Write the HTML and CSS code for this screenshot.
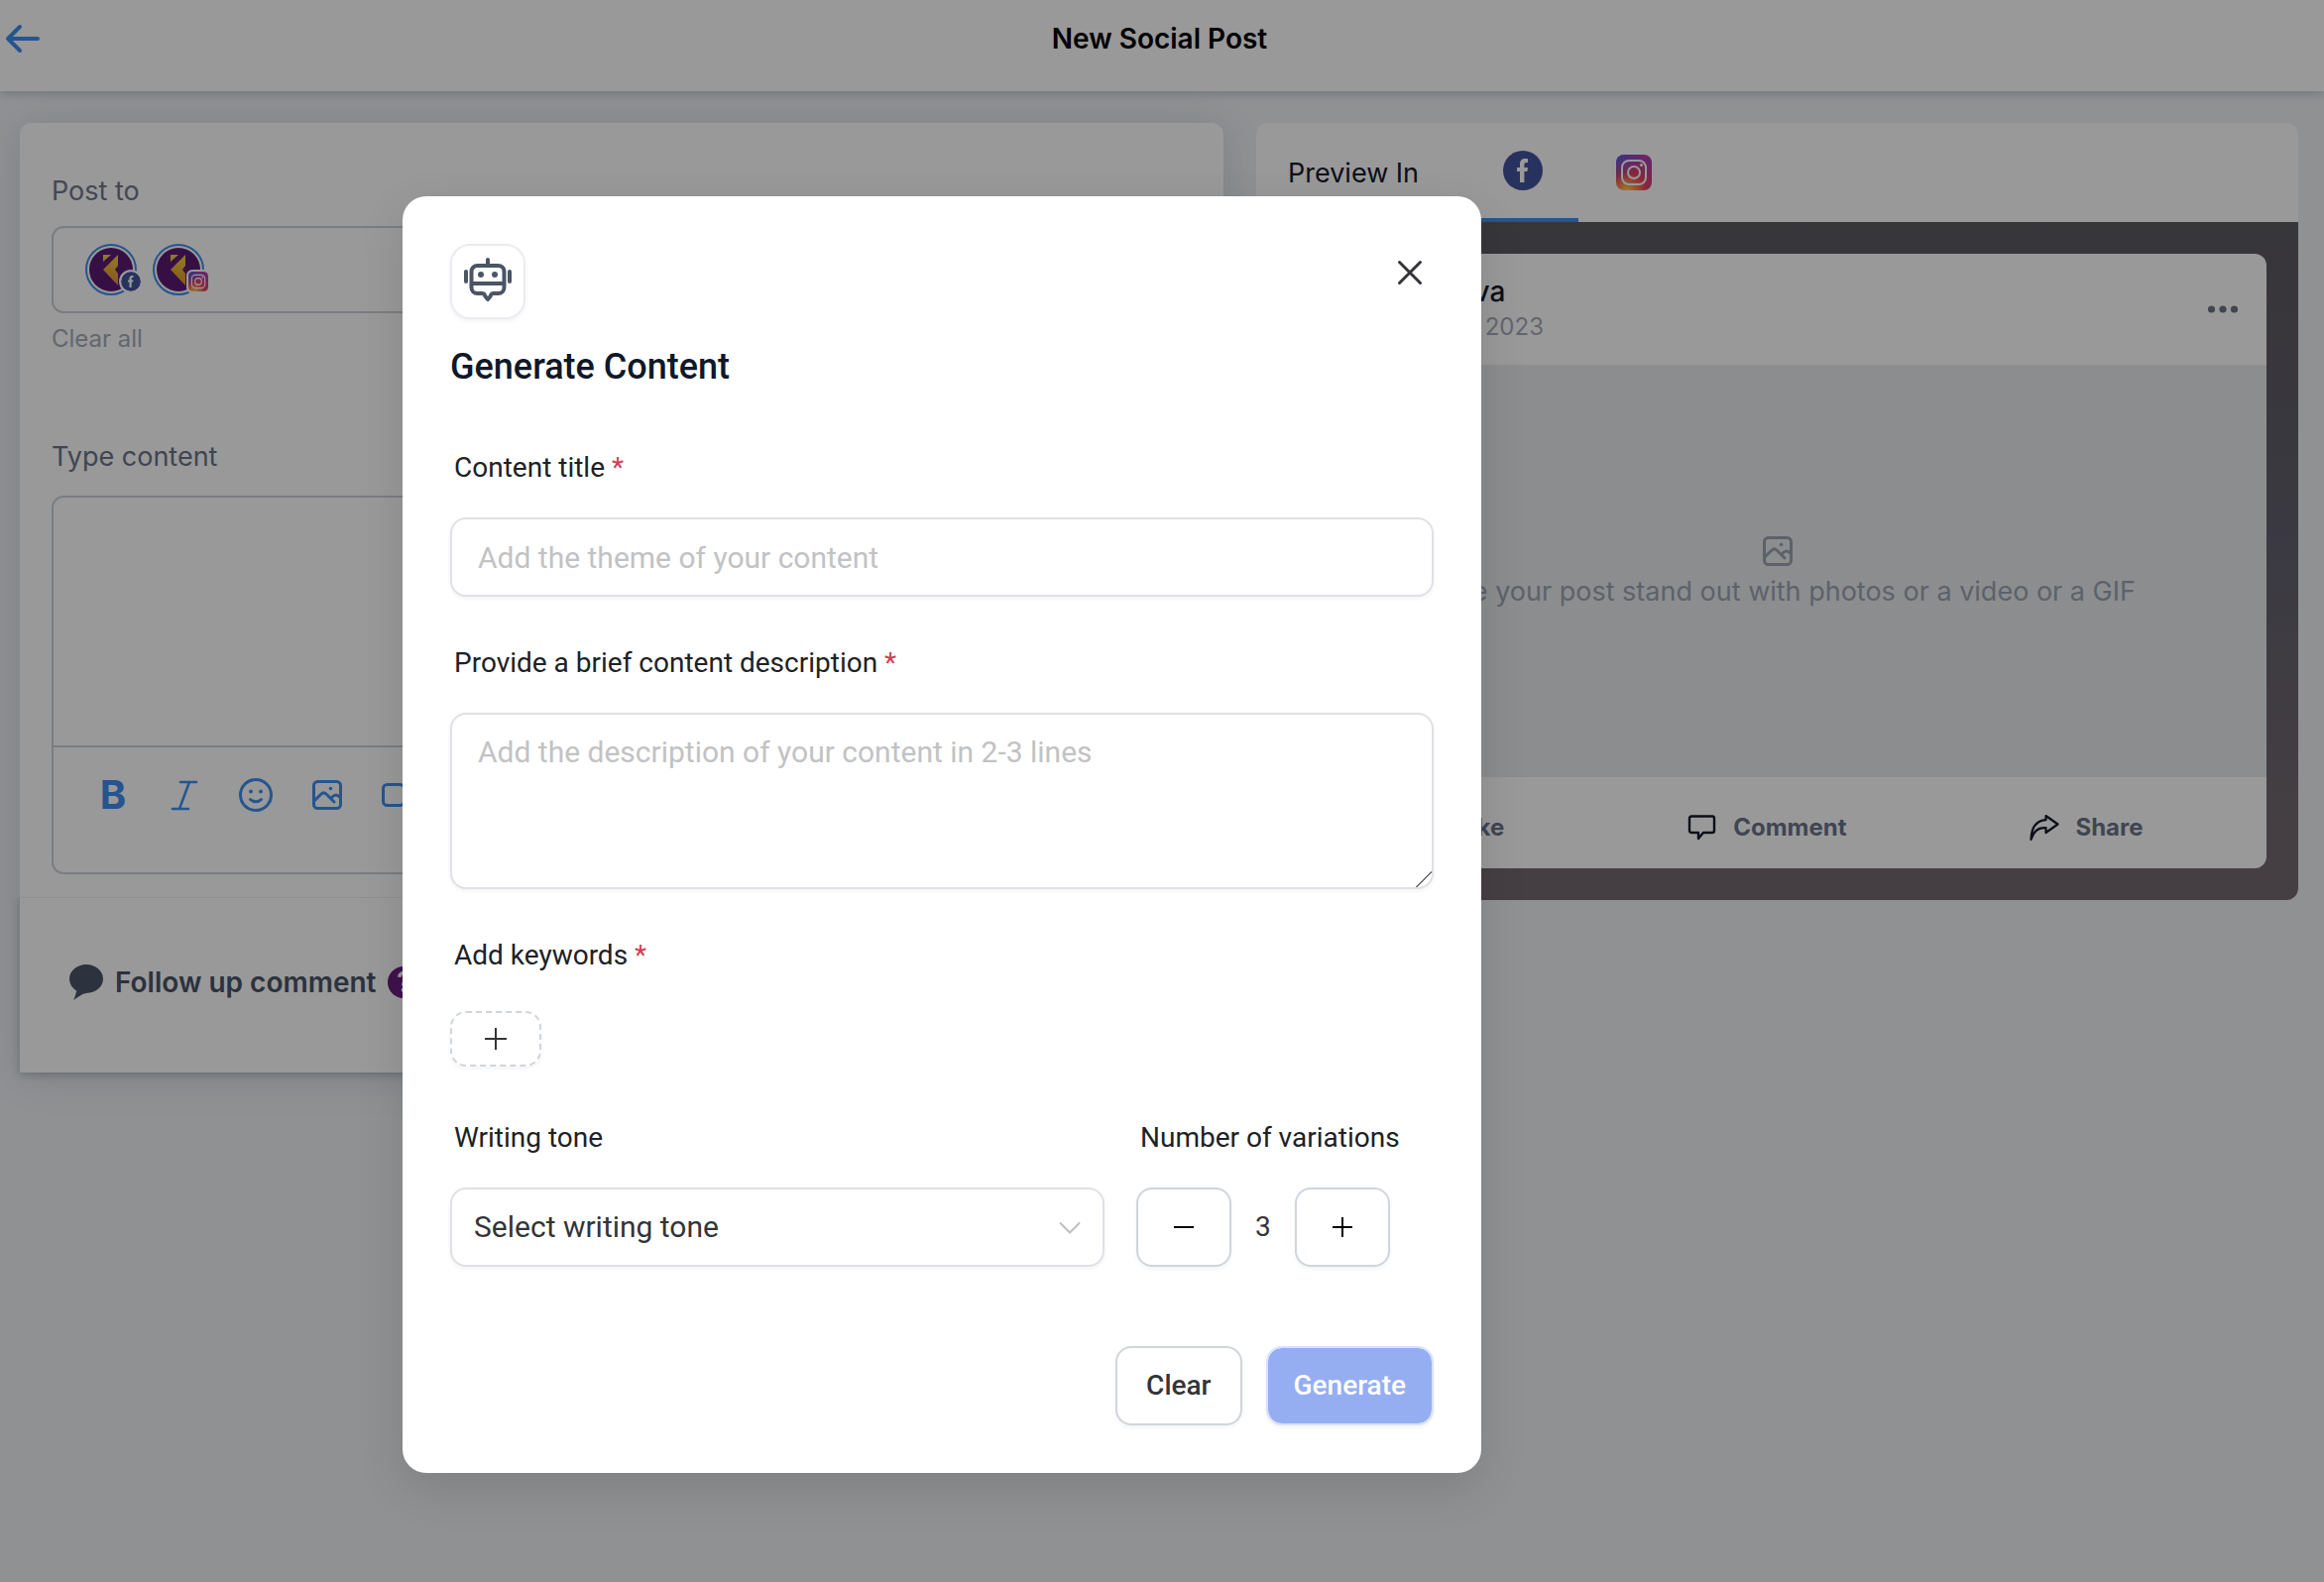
FILE: index.html
```html
<!DOCTYPE html>
<html lang="en">
<head>
<meta charset="utf-8">
<meta name="viewport" content="width=device-width, initial-scale=1">
<title>New Social Post</title>
<link rel="stylesheet" href="styles.css">
</head>
<body>
<svg class="defs" aria-hidden="true">
  <defs>
    <radialGradient id="ig-warm" cx="0.3" cy="1.05" r="1">
      <stop offset="0" stop-color="#ffd86b"/>
      <stop offset="0.25" stop-color="#fb8c4e"/>
      <stop offset="0.55" stop-color="#e4405f"/>
      <stop offset="1" stop-color="#b13fae"/>
    </radialGradient>
    <radialGradient id="ig-cool" cx="0" cy="0" r="0.75">
      <stop offset="0" stop-color="#4a5fd8"/>
      <stop offset="1" stop-color="#6a4fd0" stop-opacity="0"/>
    </radialGradient>
    <linearGradient id="gold" x1="0" y1="0" x2="0" y2="1">
      <stop offset="0" stop-color="#f5cf3c"/>
      <stop offset="1" stop-color="#e09030"/>
    </linearGradient>
    <symbol id="facebook" viewBox="0 0 40 40">
      <circle cx="20" cy="20" r="20" fill="#43549f"/>
      <path d="M17 32V21h-3v-4h3v-3.400c0-3.700 2-5.600 5.400-5.600 1.300 0 2.600.2 2.600.2V12h-1.700c-1.400 0-1.900.8-1.900 1.900V17h3.600l-.6 4h-3v11z" fill="#fff"/>
    </symbol>
    <symbol id="instagram" viewBox="0 0 36 36">
      <rect width="36" height="36" rx="8" fill="url(#ig-warm)"/>
      <rect width="36" height="36" rx="8" fill="url(#ig-cool)"/>
      <rect x="6" y="6" width="24" height="24" rx="7" fill="none" stroke="#fff" stroke-width="2"/>
      <circle cx="18" cy="18" r="6" fill="none" stroke="#fff" stroke-width="2"/>
      <circle cx="25.500" cy="10.500" r="1.600" fill="#fff"/>
    </symbol>
    <symbol id="brand" viewBox="0 0 44 44">
      <circle cx="22" cy="22" r="22" fill="#5a1c72"/>
      <path d="M29 7v11l-3 4 3 4v12L14 22z M14 7h8l-8 7z" fill="url(#gold)"/>
    </symbol>
    <symbol id="picture" viewBox="0 0 30 30">
      <g fill="none" stroke="currentColor" stroke-width="3" stroke-linecap="round" stroke-linejoin="round">
        <rect x="1.500" y="1.500" width="27" height="27" rx="4"/>
        <path d="M2 21l7-7c1.600-1.500 3.400-1.500 5 0l8 8M19 18c3-3.500 5.500-4 9-.5"/>
      </g>
      <circle cx="18.500" cy="8.500" r="1.800" fill="currentColor"/>
    </symbol>
  </defs>
</svg>

<header class="topbar">
  <a class="back" href="#" aria-label="Back">
    <svg width="36" height="30" viewBox="0 0 36 30"><path d="M33 15H3M15 3L3 15l12 12" fill="none" stroke="currentColor" stroke-width="4" stroke-linecap="round" stroke-linejoin="round"/></svg>
  </a>
  <h1>New Social Post</h1>
</header>

<main class="page">
  <section class="composer">
    <div class="editor-card">
      <h2 class="field-name">Post to</h2>
      <div class="accounts">
        <div class="account">
          <svg class="avatar"><use href="#brand"/></svg>
          <svg class="badge round"><use href="#facebook"/></svg>
        </div>
        <div class="account">
          <svg class="avatar"><use href="#brand"/></svg>
          <svg class="badge"><use href="#instagram"/></svg>
        </div>
      </div>
      <button class="clear-all" type="button">Clear all</button>
      <label class="field-name type-label" for="post-text">Type content</label>
      <div class="editor">
        <textarea id="post-text"></textarea>
        <div class="tools">
          <button type="button" class="bold" aria-label="Bold">B</button>
          <button type="button" aria-label="Italic"><svg width="30" height="34" viewBox="0 0 30 34"><path d="M11 4h16M3 31h16M20 4L10 31" fill="none" stroke="currentColor" stroke-width="2.500" stroke-linecap="round"/></svg></button>
          <button type="button" aria-label="Emoji"><svg width="36" height="36" viewBox="0 0 36 36"><circle cx="18" cy="18" r="15.500" fill="none" stroke="currentColor" stroke-width="3"/><path d="M12.500 22.500c3 3 8 3 11 0" fill="none" stroke="currentColor" stroke-width="3" stroke-linecap="round"/><circle cx="13" cy="14.500" r="1.900" fill="currentColor"/><circle cx="23" cy="14.500" r="1.900" fill="currentColor"/></svg></button>
          <button type="button" aria-label="Image"><svg width="30" height="30"><use href="#picture"/></svg></button>
          <button type="button" aria-label="Video"><svg width="36" height="28" viewBox="0 0 36 28"><g fill="none" stroke="currentColor" stroke-width="3" stroke-linejoin="round"><rect x="2.500" y="3.500" width="21" height="21" rx="4"/><path d="M24 12l9-5v14l-9-5"/></g></svg></button>
        </div>
      </div>
    </div>
    <div class="followup">
      <svg width="34" height="36" viewBox="0 0 34 36"><path d="M17 0c9.400 0 17 6.400 17 14.600S26.400 29 17 29c-4 .5-8 3.500-12.800 7 1-2.500 2.300-6 3-9.500C2.900 24 0 19.600 0 14.600 0 6.400 7.600 0 17 0z" fill="currentColor"/></svg>
      <span>Follow up comment</span>
      <span class="help">?</span>
    </div>
  </section>

  <section class="preview">
    <nav class="tabs">
      <span class="tabs-title">Preview In</span>
      <a class="tab active" href="#" aria-label="Facebook"><svg width="40" height="40"><use href="#facebook"/></svg></a>
      <a class="tab" href="#" aria-label="Instagram"><svg width="36" height="36"><use href="#instagram"/></svg></a>
    </nav>
    <div class="stage">
      <article class="post">
        <div class="post-head">
          <svg class="post-avatar"><use href="#brand"/></svg>
          <div class="who"><strong>Kontova</strong><span>24 Aug 2023</span></div>
          <svg class="more" width="32" height="8" viewBox="0 0 32 8"><g fill="currentColor"><circle cx="4.500" cy="4" r="3.600"/><circle cx="16" cy="4" r="3.600"/><circle cx="27.500" cy="4" r="3.600"/></g></svg>
        </div>
        <div class="post-media">
          <svg width="30" height="30"><use href="#picture"/></svg>
          <p>Make your post stand out with photos or a video or a GIF</p>
        </div>
        <div class="post-actions">
          <span class="action"><svg width="30" height="30" viewBox="0 0 30 30"><path d="M3 14h5v13H3zM8 14l6-11c4 0 4 3 3 9h9l-3 15H8" fill="none" stroke="currentColor" stroke-width="2"/></svg><b>Like</b></span>
          <span class="action"><svg width="30" height="30" viewBox="0 0 30 30"><path d="M4 3.500h21a2 2 0 0 1 2 2V18a2 2 0 0 1-2 2h-9l-5 6v-6H4a2 2 0 0 1-2-2V5.500a2 2 0 0 1 2-2z" fill="none" stroke="currentColor" stroke-width="2.400" stroke-linejoin="round"/></svg><b>Comment</b></span>
          <span class="action"><svg width="30" height="30" viewBox="0 0 30 30"><path d="M16.500 3L28.500 11.500 16.500 20v-4.800C9 14.500 4 18.500 1.500 27 1.800 15 7 8 16.500 7.200z" fill="none" stroke="currentColor" stroke-width="2.200" stroke-linejoin="round"/></svg><b>Share</b></span>
        </div>
      </article>
    </div>
  </section>
</main>

<div class="overlay">
  <form class="modal" role="dialog" aria-labelledby="dialog-title">
    <div class="modal-top">
      <span class="bot">
        <svg width="48" height="48" viewBox="0 0 48 48"><g fill="none" stroke="currentColor" stroke-width="4" stroke-linecap="round" stroke-linejoin="round"><path d="M24 2v5"/><path d="M13.500 8h21a6 6 0 0 1 6 6v16a6 6 0 0 1-6 6h-5c-2 0-2 1-3 3L24 42l-2.500-3c-1-2-1-3-3-3h-5a6 6 0 0 1-6-6V14a6 6 0 0 1 6-6z"/><path d="M8 26h32"/><path d="M2 14v10M46 14v10"/></g><circle cx="17" cy="17" r="3" fill="currentColor"/><circle cx="31" cy="17" r="3" fill="currentColor"/></svg>
      </span>
      <button class="close" type="button" aria-label="Close"><svg width="28" height="28" viewBox="0 0 28 28"><path d="M3.500 3.500l21 21M24.500 3.500l-21 21" stroke="currentColor" stroke-width="3" stroke-linecap="round"/></svg></button>
    </div>
    <h2 id="dialog-title">Generate Content</h2>

    <label class="label" for="title">Content title <i>*</i></label>
    <input class="box" id="title" type="text" placeholder="Add the theme of your content">

    <label class="label" for="desc">Provide a brief content description <i>*</i></label>
    <textarea class="box desc" id="desc" placeholder="Add the description of your content in 2-3 lines"></textarea>

    <span class="label">Add keywords <i>*</i></span>
    <button class="add" type="button" aria-label="Add keyword"><svg width="24" height="24" viewBox="0 0 24 24"><path d="M12 1v22M1 12h22" stroke="currentColor" stroke-width="2"/></svg></button>

    <div class="options">
      <div class="tone">
        <label class="label" for="tone">Writing tone</label>
        <div class="select-wrap">
          <select class="box" id="tone"><option>Select writing tone</option></select>
          <svg class="chevron" width="22" height="14" viewBox="0 0 22 14"><path d="M1 1.500l10 10 10-10" fill="none" stroke="currentColor" stroke-width="2"/></svg>
        </div>
      </div>
      <div class="count">
        <span class="label">Number of variations</span>
        <div class="stepper">
          <button type="button" aria-label="Fewer"><svg width="20" height="20" viewBox="0 0 20 20"><path d="M0 10h20" stroke="currentColor" stroke-width="2"/></svg></button>
          <output>3</output>
          <button type="button" aria-label="More"><svg width="20" height="20" viewBox="0 0 20 20"><path d="M0 10h20M10 0v20" stroke="currentColor" stroke-width="2"/></svg></button>
        </div>
      </div>
    </div>

    <div class="actions">
      <button class="btn" type="reset">Clear</button>
      <button class="btn primary" type="submit">Generate</button>
    </div>
  </form>
</div>
</body>
</html>
```
FILE: styles.css
```css
* { box-sizing: border-box; }

body {
  margin: 0;
  min-height: 100vh;
  background: #eff2f5;
  font-family: Inter, "Liberation Sans", sans-serif;
  font-size: 27px;
  line-height: 36px;
  color: #14192b;
}

h1, h2, p { margin: 0; font-size: inherit; font-weight: inherit; }
button, input, select, textarea { font: inherit; color: inherit; }
button { padding: 0; border: 0; background: none; cursor: pointer; }
svg { display: block; flex: none; }
.defs { position: absolute; width: 0; height: 0; }

/* Top bar */
.topbar {
  display: grid;
  grid-template-columns: 40px 1fr 46px;
  align-items: start;
  height: 92px;
  padding: 21px 4px 0 5px;
  background: #fff;
  box-shadow: 0 2px 10px rgba(30, 40, 70, .25);
}
.topbar h1 { text-align: center; font-size: 28px; font-weight: 600; color: #000; }
.back { color: #3e8ef0; padding-top: 3px; }

/* Page */
.page {
  display: grid;
  grid-template-columns: 1214fr 1051fr;
  align-items: start;
  gap: 33px;
  padding: 32px 26px 0 20px;
}
.composer { box-shadow: 0 4px 40px rgba(50, 60, 90, .16); border-radius: 12px 12px 0 0; }
.editor-card {
  padding: 51px 32px 24px;
  background: #fff;
  border-radius: 12px 12px 0 0;
}
.field-name { display: block; color: #707890; }
.accounts {
  display: flex;
  gap: 16px;
  height: 88px;
  margin-top: 17px;
  padding: 16px 32px;
  border: 2px solid #cbd0da;
  border-radius: 12px;
}
.account {
  position: relative;
  width: 52px;
  height: 52px;
  padding: 2px;
  border: 2px solid #3e8ef0;
  border-radius: 50%;
}
.avatar { width: 44px; height: 44px; }
.badge {
  position: absolute;
  right: -8px;
  bottom: 0;
  width: 24px;
  height: 24px;
  border: 2px solid #fff;
  border-radius: 6px;
  background: #fff;
}
.badge.round { border-radius: 50%; }
.clear-all {
  display: block;
  margin-top: 8px;
  font-size: 24px;
  color: #a3abb9;
}
.type-label { margin-top: 83px; color: #6b7389; }
.editor {
  margin-top: 21px;
  border: 2px solid #cbd0da;
  border-radius: 12px;
}
.editor textarea {
  display: block;
  width: 100%;
  height: 250px;
  padding: 24px;
  border: 0;
  background: transparent;
  resize: none;
}
.tools {
  display: flex;
  height: 128px;
  padding: 30px 24px;
  border-top: 2px solid #cbd0da;
  color: #3e8ef0;
}
.tools button {
  display: flex;
  align-items: center;
  justify-content: center;
  width: 72px;
  height: 36px;
}
.tools .bold { font-size: 40px; font-weight: 700; }
.followup {
  display: flex;
  align-items: center;
  gap: 12px;
  height: 176px;
  padding: 0 50px 6px;
  background: #fff;
  color: #4a5468;
  font-size: 28px;
  font-weight: 600;
  box-shadow: 0 2px 8px rgba(30, 40, 70, .25);
  clip-path: inset(-1px -20px -20px -20px);
}
.help {
  width: 32px;
  height: 32px;
  border-radius: 50%;
  background: #6b1d80;
  color: #fff;
  text-align: center;
  font-size: 28px;
  line-height: 32px;
}

/* Preview */
.tabs {
  display: flex;
  height: 100px;
  padding-left: 32px;
  background: #fff;
  border-radius: 12px 12px 0 0;
}
.tabs-title { width: 181px; padding-top: 33px; }
.tab {
  display: flex;
  justify-content: center;
  align-items: flex-end;
  width: 112px;
  padding-bottom: 28px;
  border-bottom: 4px solid transparent;
}
.tab.active { border-color: #3e8ef0; }
.stage {
  padding: 32px;
  border-radius: 0 0 12px 12px;
  background: linear-gradient(#5d5a60, #62606d 45%, #736a70 90%);
}
.post { overflow: hidden; background: #fff; border-radius: 12px; }
.post-head {
  display: flex;
  align-items: center;
  gap: 22px;
  height: 112px;
  padding: 0 28px 0 24px;
}
.post-avatar { width: 64px; height: 64px; }
.who { display: flex; flex: 1; flex-direction: column; }
.who strong { font-size: 28px; font-weight: 500; }
.who span { font-size: 24px; color: #a3abb9; }
.more { color: #6b7389; }
.post-media {
  display: flex;
  flex-direction: column;
  align-items: center;
  justify-content: center;
  gap: 8px;
  height: 416px;
  padding-top: 4px;
  background: #eaecef;
  color: #9aa3b2;
}
.post-actions {
  display: flex;
  justify-content: space-around;
  align-items: center;
  height: 92px;
  padding: 10px 32px 0;
  font-size: 24px;
}
.action { display: flex; align-items: center; gap: 16px; }
.action b { font-weight: 700; color: #6b7389; }

/* Dialog */
.overlay {
  position: absolute;
  inset: 0;
  padding: 198px 24px 24px 406px;
  background: rgba(0, 0, 0, .4);
}
.modal {
  max-width: 1088px;
  padding: 48px;
  border-radius: 24px;
  background: #fff;
  box-shadow: 0 16px 48px rgba(0, 0, 0, .12);
  font-family: Roboto, "Liberation Sans", sans-serif;
  font-size: 28px;
  color: #333439;
}
.modal-top { display: flex; justify-content: space-between; align-items: flex-start; }
.bot {
  padding: 12px;
  border: 2px solid #eaecf0;
  border-radius: 20px;
  color: #4b5565;
  box-shadow: 0 2px 4px rgba(16, 24, 40, .06);
}
.close { padding: 15px 10px; }
.modal h2 {
  margin: 24px 0 58px;
  font-size: 36px;
  font-weight: 500;
  line-height: 48px;
  color: #101828;
}
.label {
  display: block;
  margin: 47px 0 30px;
  padding-left: 4px;
  line-height: 40px;
  color: #202124;
}
.label i { font-style: normal; color: #cc3f52; }
.box {
  display: block;
  width: 100%;
  height: 80px;
  padding: 0 26px;
  border: 2px solid #dfe1e6;
  border-radius: 16px;
  background: #fff;
  box-shadow: 0 2px 4px rgba(16, 24, 40, .05);
  font-size: 30px;
  line-height: 40px;
  outline: 0;
}
.box::placeholder { color: #c2c2c4; opacity: 1; }
.desc {
  height: 178px;
  padding: 18px 26px;
  resize: vertical;
  background: linear-gradient(135deg, transparent 47%, #6f6f6f 47% 54%, transparent 54% 78%, #8a8a8a 78% 84%, transparent 84%) right bottom / 16px 16px no-repeat #fff;
}
.desc::-webkit-resizer { background: transparent; }
.add {
  display: grid;
  place-items: center;
  width: 92px;
  height: 56px;
  margin-top: 36px;
  border: 2px dashed #d0d5dd;
  border-radius: 16px;
  box-shadow: 0 2px 4px rgba(16, 24, 40, .05);
}
.options {
  display: grid;
  grid-template-columns: 660fr 300fr;
  gap: 32px;
  margin-top: 5px;
}
.select-wrap { position: relative; }
.select-wrap select { appearance: none; padding: 0 22px; }
.chevron { position: absolute; right: 24px; top: 34px; color: #bfbfc2; pointer-events: none; }
.stepper { display: flex; align-items: center; gap: 24px; }
.stepper button {
  display: grid;
  place-items: center;
  width: 96px;
  height: 80px;
  border: 2px solid #d0d5dd;
  border-radius: 16px;
  color: #000;
  box-shadow: 0 2px 4px rgba(16, 24, 40, .05);
}
.actions { display: flex; justify-content: flex-end; gap: 24px; margin-top: 80px; }
.btn {
  height: 80px;
  padding: 0 29px;
  border: 2px solid #d0d5dd;
  border-radius: 16px;
  font-weight: 500;
  box-shadow: 0 2px 4px rgba(16, 24, 40, .05);
}
.primary { padding: 0 26px; border-color: #d8e2fc; background: #95aef2; background-clip: padding-box; color: #fff; }
```
